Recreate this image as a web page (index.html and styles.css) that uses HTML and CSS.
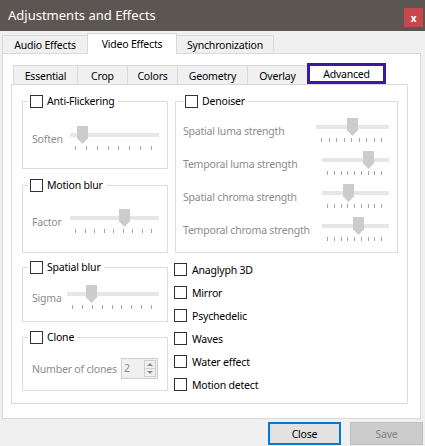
FILE: index.html
```html
<!DOCTYPE html>
<html>
<head>
<meta charset="utf-8">
<title>Adjustments and Effects</title>
<link rel="stylesheet" href="styles.css">
</head>
<body>
<div class="window">
  <header class="titlebar">
    <span class="title">Adjustments and Effects</span>
    <span class="close">x</span>
  </header>
  <nav class="tabs outer-tabs">
    <span class="tab t-audio">Audio Effects</span>
    <span class="tab active t-video">Video Effects</span>
    <span class="tab t-sync">Synchronization</span>
  </nav>
  <section class="outer-pane">
    <nav class="tabs inner-tabs">
      <span class="tab t-essential">Essential</span>
      <span class="tab t-crop">Crop</span>
      <span class="tab t-colors">Colors</span>
      <span class="tab t-geometry">Geometry</span>
      <span class="tab t-overlay">Overlay</span>
      <span class="tab active highlight t-advanced">Advanced</span>
    </nav>
    <div class="inner-pane">
      <div class="col col-left">
        <fieldset class="group g-flicker">
          <legend><span class="cb"></span>Anti-Flickering</legend>
          <div class="srow">
            <span class="lbl w38">Soften</span>
            <div class="slider"><span class="groove"></span><span class="handle" style="left:7px"></span><span class="ticks"><i></i><i></i><i></i><i></i><i></i><i></i><i></i><i></i></span></div>
          </div>
        </fieldset>
        <fieldset class="group g-motion">
          <legend><span class="cb"></span>Motion blur</legend>
          <div class="srow">
            <span class="lbl w38">Factor</span>
            <div class="slider"><span class="groove"></span><span class="handle" style="left:49px"></span><span class="ticks"><i></i><i></i><i></i><i></i><i></i><i></i><i></i><i></i><i></i></span></div>
          </div>
        </fieldset>
        <fieldset class="group g-spatial">
          <legend><span class="cb"></span>Spatial blur</legend>
          <div class="srow">
            <span class="lbl w35">Sigma</span>
            <div class="slider"><span class="groove"></span><span class="handle" style="left:19px"></span><span class="ticks"><i></i><i></i><i></i><i></i><i></i><i></i><i></i><i></i><i></i></span></div>
          </div>
        </fieldset>
        <fieldset class="group g-clone">
          <legend><span class="cb"></span>Clone</legend>
          <div class="crow">
            <span class="lbl w89">Number of clones</span>
            <div class="spin">
              <span class="spin-val">2</span>
              <span class="spin-btns"><span class="up"></span><span class="down"></span></span>
            </div>
          </div>
        </fieldset>
      </div>
      <div class="col col-right">
        <fieldset class="group g-denoise">
          <legend><span class="cb"></span>Denoiser</legend>
          <div class="drow">
            <span class="lbl">Spatial luma strength</span>
            <div class="slider s-wide"><span class="groove"></span><span class="handle" style="left:31px"></span><span class="ticks"><i></i><i></i><i></i><i></i><i></i><i></i><i></i><i></i><i></i></span></div>
          </div>
          <div class="drow">
            <span class="lbl">Temporal luma strength</span>
            <div class="slider s-narrow"><span class="groove"></span><span class="handle" style="left:41px"></span><span class="ticks"><i></i><i></i><i></i><i></i><i></i><i></i><i></i><i></i><i></i></span></div>
          </div>
          <div class="drow">
            <span class="lbl">Spatial chroma strength</span>
            <div class="slider s-narrow"><span class="groove"></span><span class="handle" style="left:21px"></span><span class="ticks"><i></i><i></i><i></i><i></i><i></i><i></i><i></i><i></i><i></i></span></div>
          </div>
          <div class="drow">
            <span class="lbl">Temporal chroma strength</span>
            <div class="slider s-narrow"><span class="groove"></span><span class="handle" style="left:31px"></span><span class="ticks"><i></i><i></i><i></i><i></i><i></i><i></i><i></i><i></i><i></i></span></div>
          </div>
        </fieldset>
        <ul class="checklist">
          <li><span class="cb"></span>Anaglyph 3D</li>
          <li><span class="cb"></span>Mirror</li>
          <li><span class="cb"></span>Psychedelic</li>
          <li><span class="cb"></span>Waves</li>
          <li><span class="cb"></span>Water effect</li>
          <li><span class="cb"></span>Motion detect</li>
        </ul>
      </div>
    </div>
  </section>
  <footer class="buttons">
    <button class="btn btn-default">Close</button>
    <button class="btn btn-disabled" disabled>Save</button>
  </footer>
</div>
</body>
</html>
```
FILE: styles.css
```css
* { box-sizing: border-box; }
html, body { margin: 0; padding: 0; }
body {
  width: 425px;
  height: 446px;
  overflow: hidden;
  background: #f0f0f0;
  font-family: "Noto Sans", "Open Sans", sans-serif;
  font-size: 10.5px;
  letter-spacing: -0.2px;
  color: #000;
}
.window { width: 425px; height: 446px; }

/* title bar */
.titlebar {
  height: 31px;
  background: #5c5652;
  display: flex;
  justify-content: space-between;
  align-items: flex-start;
  padding: 0 2px 0 8px;
}
.title {
  color: #fff;
  font-size: 13px;
  letter-spacing: 0;
  line-height: 31px;
}
.close {
  margin-top: 8px;
  width: 19px;
  height: 19px;
  background: #c8474a;
  color: #fff;
  font-size: 10px;
  font-weight: bold;
  display: flex;
  align-items: center;
  justify-content: center;
  line-height: 1;
}

/* tabs */
.tabs {
  display: flex;
  align-items: flex-end;
  position: relative;
  z-index: 1;
}
.tab {
  border: 1px solid #d9d9d9;
  border-bottom: none;
  background: #f0f0f0;
  display: flex;
  align-items: center;
  justify-content: center;
  white-space: nowrap;
  margin-left: -1px;
}
.tab:first-child { margin-left: 0; }
.tab.active { background: #fff; }

.outer-tabs { height: 22px; padding-left: 2px; }
.outer-tabs .tab { height: 18px; padding-top: 1px; }
.outer-tabs .tab.active { height: 21px; margin-bottom: -1px; padding-top: 0; }
.t-audio { width: 86px; }
.t-video { width: 90px; }
.t-sync { width: 98px; }

.outer-pane {
  margin-left: 2px;
  width: 419px;
  height: 366px;
  border: 1px solid #d9d9d9;
  background: #fff;
  padding: 9px 0 0 8px;
}
.inner-tabs { height: 21px; padding-left: 2px; }
.inner-tabs .tab { height: 19px; padding-top: 1px; }
.inner-tabs .tab.highlight {
  height: 21px;
  border: 3px solid #3c1a9e;
  padding-top: 0;
}
.t-essential { width: 65px; }
.t-crop { width: 51px; }
.t-colors { width: 51px; }
.t-geometry { width: 71px; }
.t-overlay { width: 61px; }
.t-advanced { width: 79px; }

.inner-pane {
  width: 397px;
  height: 320px;
  border: 1px solid #d9d9d9;
  background: #fff;
  display: flex;
  padding: 10px 0 0 10px;
}
.col-left { width: 146px; }
.col-right { width: 223px; margin-left: 7px; }

/* group boxes */
.group {
  margin: 0;
  border: 1px solid #dcdcdc;
  min-width: 0;
}
.group legend {
  display: flex;
  align-items: center;
  height: 13px;
  line-height: 13px;
  padding: 0 3px 0 2px;
  margin-left: -4px;
}
.cb {
  width: 13px;
  height: 13px;
  border: 1px solid #333;
  background: #fff;
  flex: none;
  margin-right: 4px;
}
.g-flicker { padding: 18px 8px 16px 9px; }
.g-motion { margin-top: 10px; padding: 17px 8px 17px 9px; }
.g-spatial { margin-top: 8px; padding: 11px 8px 10px 9px; }
.g-clone { margin-top: 9px; padding: 14px 8px 11px 9px; }
.g-denoise { padding: 10px 8px 9px 7px; }
.g-denoise legend { margin-left: 0; }

.lbl { color: #8c8c8c; white-space: nowrap; flex: none; }
.w38 { width: 38px; }
.w35 { width: 35px; }
.w89 { width: 89px; }

.srow { display: flex; align-items: center; height: 26px; }
.srow .slider { flex: 1; }
.drow {
  display: flex;
  align-items: center;
  justify-content: space-between;
  height: 26px;
}
.drow + .drow { margin-top: 7px; }
.s-wide { width: 73px; }
.s-narrow { width: 67px; }

.slider { position: relative; height: 26px; }
.groove {
  position: absolute;
  left: 0; right: 0;
  top: 7px;
  height: 4px;
  background: #e6e6e6;
}
.handle {
  position: absolute;
  top: 0;
  width: 11px;
  height: 18px;
  background: #cccccc;
  clip-path: polygon(0 0, 100% 0, 100% 68%, 50% 100%, 0 68%);
}
.ticks {
  position: absolute;
  left: 5px; right: 7px;
  top: 20px;
  height: 4px;
  display: flex;
  justify-content: space-between;
}
.ticks i { width: 1px; height: 4px; background: #a6a6a6; }

/* clone spinbox */
.crow { display: flex; align-items: center; height: 21px; }
.spin {
  width: 37px;
  height: 21px;
  border: 1px solid #cfcfcf;
  background: #f0f0f0;
  display: flex;
}
.spin-val { flex: 1; color: #8c8c8c; padding-left: 2px; line-height: 19px; }
.spin-btns {
  width: 12px;
  margin: 1px;
  border: 1px solid #d0d0d0;
  display: flex;
  flex-direction: column;
}
.spin-btns span { flex: 1; display: flex; align-items: center; justify-content: center; }
.spin-btns .up { border-bottom: 1px solid #d0d0d0; }
.spin-btns .up::before {
  content: "";
  border-left: 3px solid transparent;
  border-right: 3px solid transparent;
  border-bottom: 3px solid #8c8c8c;
}
.spin-btns .down::before {
  content: "";
  border-left: 3px solid transparent;
  border-right: 3px solid transparent;
  border-top: 3px solid #8c8c8c;
}

/* checklist */
.checklist {
  list-style: none;
  margin: 5px 0 0 -1px;
  padding: 0;
}
.checklist li {
  display: flex;
  align-items: center;
  height: 23px;
}
.checklist .cb { margin-right: 5px; }

/* buttons */
.buttons {
  display: flex;
  justify-content: flex-end;
  gap: 9px;
  padding: 3px 2px 0 0;
}
.btn {
  width: 73px;
  height: 23px;
  font-family: inherit;
  font-size: 10.5px;
  letter-spacing: -0.2px;
  padding: 0;
}
.btn-default {
  background: #e1e1e1;
  border: 2px solid #0078d7;
  color: #000;
}
.btn-disabled {
  background: #cccccc;
  border: 1px solid #bfbfbf;
  color: #838383;
}
```
